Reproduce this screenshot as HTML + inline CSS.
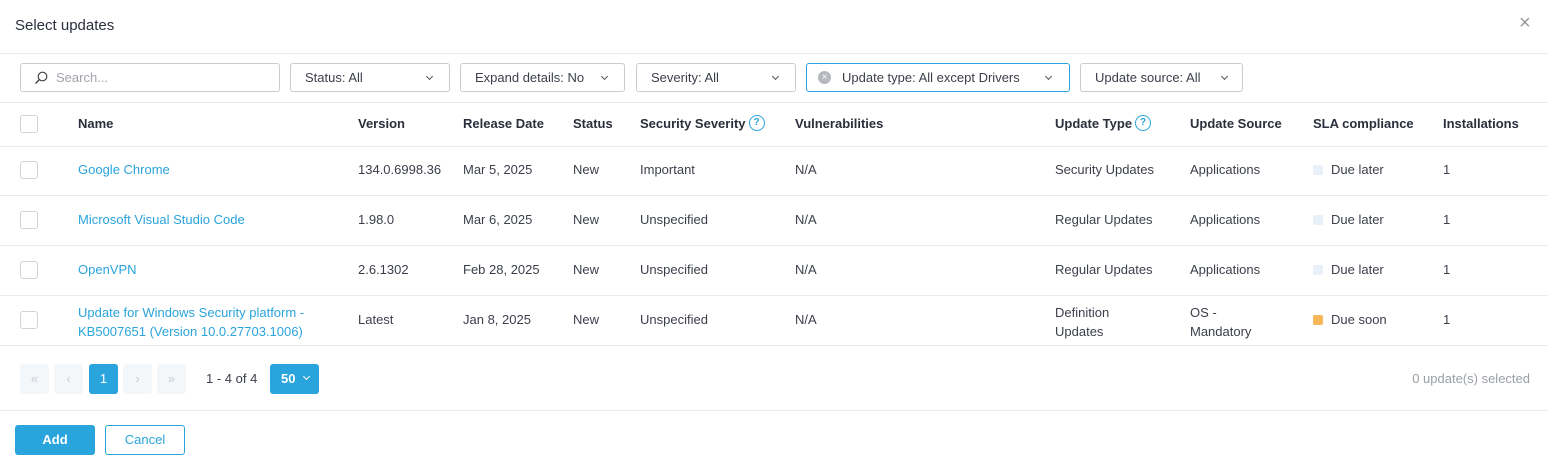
<!DOCTYPE html>
<html><head><style>
*{box-sizing:border-box;margin:0;padding:0}
body{width:1548px;height:469px;background:#fff;font-family:"Liberation Sans",sans-serif;font-size:13px;color:#3b3f4a;position:relative;overflow:hidden}
.a{position:absolute;white-space:nowrap}
.line{position:absolute;left:0;width:1548px;height:1px;background:#e8eaee}
.f{position:absolute;top:63px;height:29px;border:1px solid #c9ccd3;border-radius:3px;font-size:13px;line-height:27px;padding-left:14px;color:#3b3f4a}
.chev{position:absolute;top:10px;width:5px;height:5px;border-right:1px solid #555;border-bottom:1px solid #555;transform:rotate(45deg)}
.cb{position:absolute;left:20px;width:18px;height:18px;border:1px solid #cfd2d8;border-radius:3px}
.h{font-weight:bold;color:#2b2f3c;top:116px}
.hq{display:flex;align-items:center;top:114px;height:18px}
.lnk{color:#2aa4dc}
.q{display:inline-block;width:16px;height:16px;border:1.5px solid #2aa4dc;border-radius:50%;color:#2aa4dc;font-size:10px;line-height:13px;text-align:center;margin-left:3px;font-weight:bold}
.pb{position:absolute;top:364px;width:29px;height:30px;background:#f4f7fa;border-radius:3px;color:#c5cdd6;text-align:center;line-height:30px;font-size:13px}
.dot{display:inline-block;width:10px;height:10px;border-radius:2px;background:#e8f1f9;margin-right:8px;vertical-align:-1px}
</style></head><body>
<div class="a" style="left:15px;top:17px;font-size:15px;color:#2b2f3c">Select updates</div>
<div class="a" style="left:1519px;top:12px;font-size:20px;color:#999">×</div>
<div class="line" style="top:53px"></div>

<div class="f" style="left:20px;width:260px;padding-left:35px;color:#a0a4ab">Search...
<svg style="position:absolute;left:13px;top:7px" width="14" height="14" viewBox="0 0 14 14"><circle cx="8.5" cy="5.5" r="4.3" fill="none" stroke="#444" stroke-width="1.2"/><line x1="5.5" y1="8.5" x2="1.5" y2="12.5" stroke="#444" stroke-width="1.3"/></svg></div>
<div class="f" style="left:290px;width:160px">Status: All<span class="chev" style="left:136px"></span></div>
<div class="f" style="left:460px;width:165px">Expand details: No<span class="chev" style="left:141px"></span></div>
<div class="f" style="left:636px;width:160px">Severity: All<span class="chev" style="left:136px"></span></div>
<div class="f" style="left:806px;width:264px;border-color:#2aa4dc;padding-left:35px">Update type: All except Drivers<span class="chev" style="left:239px"></span>
<span style="position:absolute;left:11px;top:7px;width:13px;height:13px;border-radius:50%;background:#b5b8be;color:#fff;font-size:10px;line-height:13px;text-align:center">×</span></div>
<div class="f" style="left:1080px;width:163px">Update source: All<span class="chev" style="left:141px"></span></div>
<div class="line" style="top:102px"></div>

<div class="cb" style="top:115px"></div>
<div class="a h" style="left:78px">Name</div>
<div class="a h" style="left:358px">Version</div>
<div class="a h" style="left:463px">Release Date</div>
<div class="a h" style="left:573px">Status</div>
<div class="a h hq" style="left:640px">Security Severity<span class="q">?</span></div>
<div class="a h" style="left:795px">Vulnerabilities</div>
<div class="a h hq" style="left:1055px">Update Type<span class="q">?</span></div>
<div class="a h" style="left:1190px">Update Source</div>
<div class="a h" style="left:1313px">SLA compliance</div>
<div class="a h" style="left:1443px">Installations</div>
<div class="line" style="top:146px"></div>

<div class="cb" style="top:161px"></div>
<div class="a lnk" style="left:78px;top:162px">Google Chrome</div>
<div class="a" style="left:358px;top:162px">134.0.6998.36</div>
<div class="a" style="left:463px;top:162px">Mar 5, 2025</div>
<div class="a" style="left:573px;top:162px">New</div>
<div class="a" style="left:640px;top:162px">Important</div>
<div class="a" style="left:795px;top:162px">N/A</div>
<div class="a" style="left:1055px;top:162px">Security Updates</div>
<div class="a" style="left:1190px;top:162px">Applications</div>
<div class="a" style="left:1313px;top:162px"><span class="dot"></span>Due later</div>
<div class="a" style="left:1443px;top:162px">1</div>
<div class="line" style="top:195px"></div>

<div class="cb" style="top:211px"></div>
<div class="a lnk" style="left:78px;top:212px">Microsoft Visual Studio Code</div>
<div class="a" style="left:358px;top:212px">1.98.0</div>
<div class="a" style="left:463px;top:212px">Mar 6, 2025</div>
<div class="a" style="left:573px;top:212px">New</div>
<div class="a" style="left:640px;top:212px">Unspecified</div>
<div class="a" style="left:795px;top:212px">N/A</div>
<div class="a" style="left:1055px;top:212px">Regular Updates</div>
<div class="a" style="left:1190px;top:212px">Applications</div>
<div class="a" style="left:1313px;top:212px"><span class="dot"></span>Due later</div>
<div class="a" style="left:1443px;top:212px">1</div>
<div class="line" style="top:245px"></div>

<div class="cb" style="top:261px"></div>
<div class="a lnk" style="left:78px;top:262px">OpenVPN</div>
<div class="a" style="left:358px;top:262px">2.6.1302</div>
<div class="a" style="left:463px;top:262px">Feb 28, 2025</div>
<div class="a" style="left:573px;top:262px">New</div>
<div class="a" style="left:640px;top:262px">Unspecified</div>
<div class="a" style="left:795px;top:262px">N/A</div>
<div class="a" style="left:1055px;top:262px">Regular Updates</div>
<div class="a" style="left:1190px;top:262px">Applications</div>
<div class="a" style="left:1313px;top:262px"><span class="dot"></span>Due later</div>
<div class="a" style="left:1443px;top:262px">1</div>
<div class="line" style="top:295px"></div>

<div class="cb" style="top:311px"></div>
<div class="a lnk" style="left:78px;top:303px;line-height:19px">Update for Windows Security platform -<br>KB5007651 (Version 10.0.27703.1006)</div>
<div class="a" style="left:358px;top:312px">Latest</div>
<div class="a" style="left:463px;top:312px">Jan 8, 2025</div>
<div class="a" style="left:573px;top:312px">New</div>
<div class="a" style="left:640px;top:312px">Unspecified</div>
<div class="a" style="left:795px;top:312px">N/A</div>
<div class="a" style="left:1055px;top:303px;line-height:19px">Definition<br>Updates</div>
<div class="a" style="left:1190px;top:303px;line-height:19px">OS -<br>Mandatory</div>
<div class="a" style="left:1313px;top:312px"><span class="dot" style="background:#f8b65b"></span>Due soon</div>
<div class="a" style="left:1443px;top:312px">1</div>
<div class="line" style="top:345px"></div>

<div class="pb" style="left:20px">«</div>
<div class="pb" style="left:54px">‹</div>
<div class="pb" style="left:89px;background:#2aa4dc;color:#fff">1</div>
<div class="pb" style="left:123px">›</div>
<div class="pb" style="left:157px">»</div>
<div class="a" style="left:206px;top:371px">1 - 4 of 4</div>
<div class="a" style="left:270px;top:364px;width:49px;height:30px;background:#2aa4dc;border-radius:3px;color:#fff;font-weight:bold;line-height:30px;padding-left:11px">50<span class="chev" style="left:34px;top:10px;border-color:#fff;width:5px;height:5px"></span></div>
<div class="a" style="right:18px;top:371px;color:#9a9ea6">0 update(s) selected</div>
<div class="line" style="top:410px"></div>

<div class="a" style="left:15px;top:425px;width:80px;height:30px;background:#2aa4dc;border-radius:3px;color:#fff;text-align:center;line-height:30px;font-weight:bold">Add</div>
<div class="a" style="left:105px;top:425px;width:80px;height:30px;border:1px solid #2aa4dc;border-radius:3px;color:#2aa4dc;text-align:center;line-height:28px">Cancel</div>
</body></html>
